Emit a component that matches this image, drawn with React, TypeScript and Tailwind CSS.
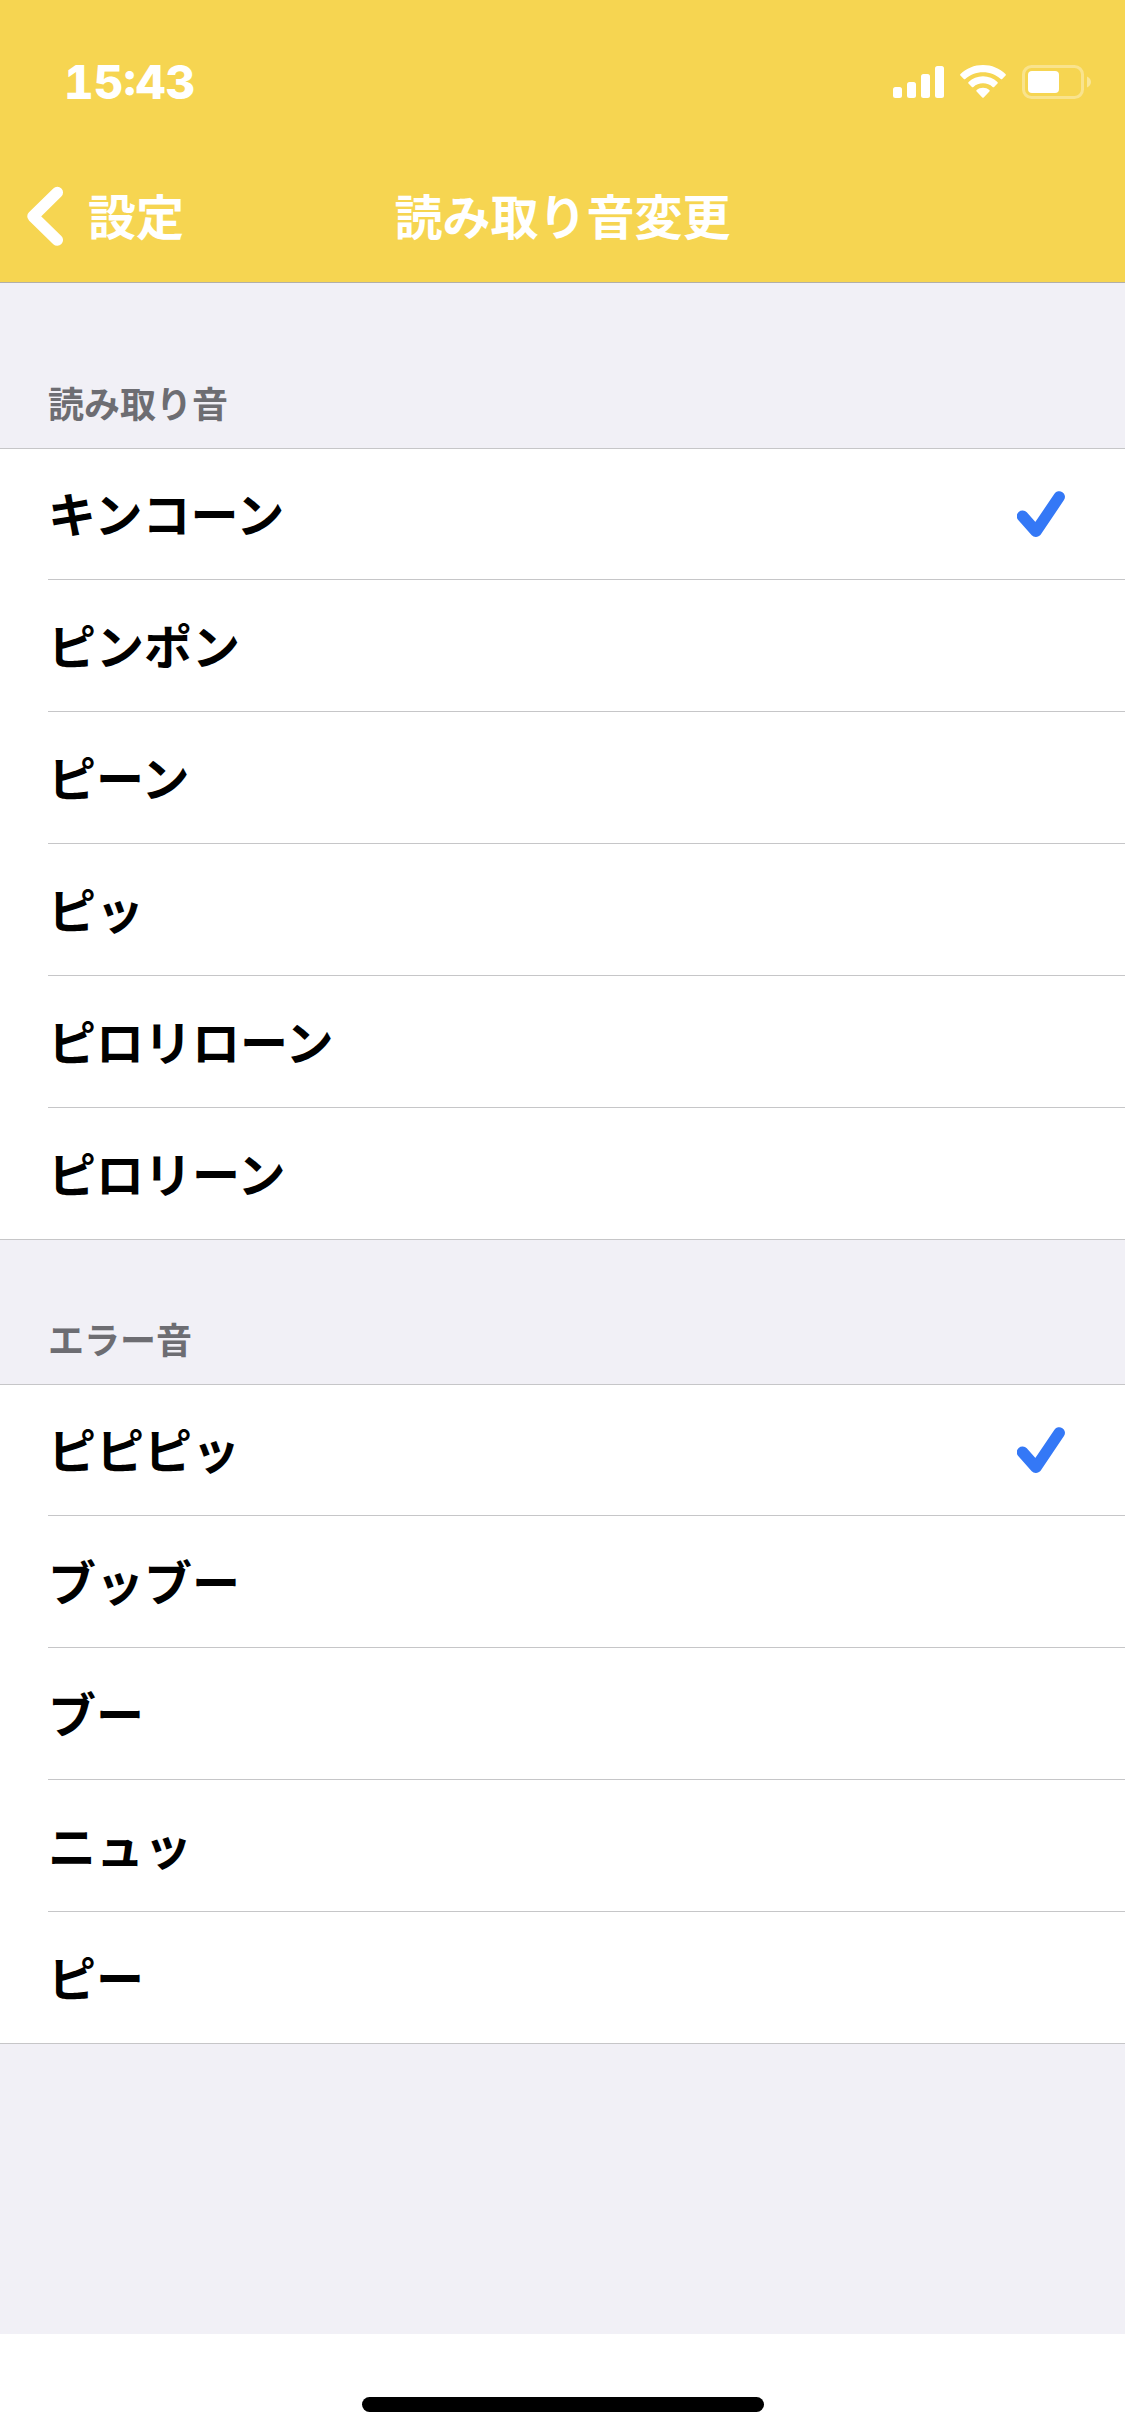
import { useState } from 'react';

const READ_SOUNDS = ['キンコーン', 'ピンポン', 'ピーン', 'ピッ', 'ピロリローン', 'ピロリーン'];
const ERROR_SOUNDS = ['ピピピッ', 'ブッブー', 'ブー', 'ニュッ', 'ピー'];

function StatusBar() {
  return (
    <div className="flex h-41 items-center justify-between pr-[34px] pl-16">
      <time className="font-['Inter',sans-serif] text-[46px] leading-none font-extrabold tabular-nums">15:43</time>
      <div className="flex items-center gap-4">
        <svg width="51" height="34" viewBox="0 0 51 34" fill="currentColor" aria-label="電波強度">
          <rect x="0" y="22" width="9" height="11" rx="2.5" />
          <rect x="14" y="17" width="9" height="16" rx="2.5" />
          <rect x="28" y="9" width="9" height="24" rx="2.5" />
          <rect x="42" y="1" width="9" height="32" rx="2.5" />
        </svg>
        <svg width="46" height="34" viewBox="0 0 46 34" fill="currentColor" aria-label="Wi-Fi">
          <path d="M23 0C14.300 0 6.300 3.400.5 9c-.5.500-.5 1.100-.1 1.500l3.400 3.500c.4.400 1 .4 1.500 0C9.900 9.700 16.100 7.200 23 7.200s13.100 2.500 17.700 6.800c.5.400 1.100.4 1.500 0l3.400-3.500c.4-.4.4-1-.1-1.500C39.700 3.400 31.700 0 23 0Z" />
          <path d="M23 11.300c-5.500 0-10.600 2.100-14.400 5.600-.5.500-.5 1.100-.1 1.500l3.400 3.500c.4.400 1 .4 1.500 0 2.500-2.300 5.900-3.600 9.600-3.600s7.100 1.300 9.600 3.600c.5.400 1.100.4 1.500 0l3.400-3.500c.4-.4.4-1-.1-1.500-3.800-3.500-8.900-5.600-14.400-5.600Z" />
          <path d="M23 22.700c-2.400 0-4.600.9-6.300 2.300-.5.400-.5 1-.1 1.400l5.700 6c.4.500 1 .5 1.400 0l5.700-6c.4-.4.4-1-.1-1.400-1.700-1.400-3.900-2.300-6.300-2.300Z" />
        </svg>
        <svg width="69" height="34" viewBox="0 0 69 34" fill="currentColor" aria-label="バッテリー">
          <rect x="1.500" y="1.500" width="59" height="31" rx="8" fill="none" stroke="currentColor" strokeWidth="3" opacity="0.35" />
          <rect x="6" y="6" width="31" height="22" rx="4" />
          <path d="M65 11.500c2.400.9 4 3 4 5.500s-1.600 4.600-4 5.500Z" opacity="0.4" />
        </svg>
      </div>
    </div>
  );
}

function NavBar() {
  return (
    <div className="grid h-[118px] grid-cols-[1fr_auto_1fr] items-start pt-5 text-5xl leading-14 font-bold">
      <a href="#settings" className="flex items-center gap-6 pl-6">
        <svg width="40" height="64" viewBox="0 0 40 64" fill="none" aria-hidden="true">
          <path
            d="M33.300 8.500 9 32.300l24.300 23.800"
            stroke="currentColor"
            strokeWidth="11.500"
            strokeLinecap="round"
            strokeLinejoin="round"
          />
        </svg>
        <span className="pb-1">設定</span>
      </a>
      <h1 className="pt-0.5">読み取り音変更</h1>
    </div>
  );
}

interface SoundSectionProps {
  name: string;
  title: string;
  sounds: string[];
  className: string;
}

function SoundSection({ name, title, sounds, className }: SoundSectionProps) {
  const [selected, setSelected] = useState(sounds[0]);

  return (
    <section>
      <h2
        id={`${name}-title`}
        className={`flex items-end px-12 pb-[22px] text-4xl leading-12 font-bold text-[#6d6d72] ${className}`}
      >
        {title}
      </h2>
      <ul role="radiogroup" aria-labelledby={`${name}-title`} className="border-y border-[#c6c6c8] bg-white">
        {sounds.map((sound) => (
          <li key={sound} className="group pl-12">
            <label className="flex h-33 cursor-pointer items-center justify-between border-b border-[#c6c6c8] pr-15 text-5xl leading-none font-bold text-black group-first:h-[131px] group-last:h-[131px] group-last:border-b-0">
              <input
                type="radio"
                name={name}
                value={sound}
                checked={selected === sound}
                onChange={() => setSelected(sound)}
                className="sr-only"
              />
              <span className="pb-1">{sound}</span>
              {selected === sound && (
                <svg width="48" height="48" viewBox="0 0 48 48" fill="none" aria-hidden="true">
                  <path
                    d="M5.500 26.200 19 41.300 42.200 6.900"
                    stroke="#3478f6"
                    strokeWidth="11.500"
                    strokeLinecap="round"
                    strokeLinejoin="round"
                  />
                </svg>
              )}
            </label>
          </li>
        ))}
      </ul>
    </section>
  );
}

export default function App() {
  return (
    <div
      lang="ja"
      className="flex min-h-screen flex-col bg-[#f1f0f6] font-['Noto_Sans_CJK_JP',sans-serif]"
    >
      <header className="border-b border-[#b2afa9] bg-[#f6d551] text-white">
        <StatusBar />
        <NavBar />
      </header>
      <main className="flex-1">
        <SoundSection name="read-sound" title="読み取り音" sounds={READ_SOUNDS} className="h-[165px]" />
        <SoundSection name="error-sound" title="エラー音" sounds={ERROR_SOUNDS} className="h-36" />
      </main>
      <footer className="flex h-[102px] items-end justify-center bg-white pb-6">
        <div className="h-[15px] w-[402px] rounded-full bg-black" />
      </footer>
    </div>
  );
}
